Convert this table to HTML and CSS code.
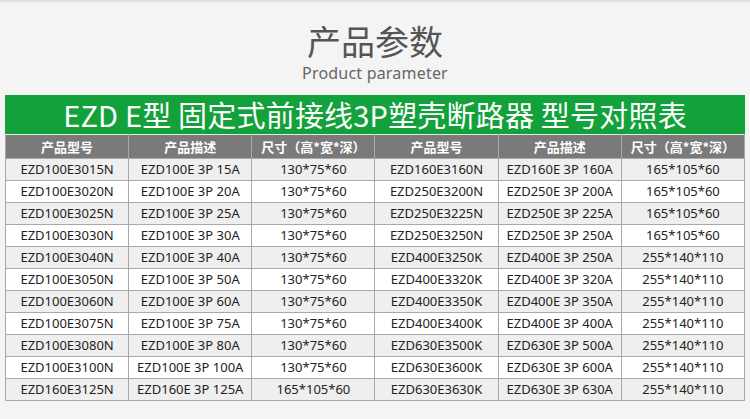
FILE: index.html
```html
<!DOCTYPE html>
<html lang="zh-CN">
<head>
<meta charset="utf-8">
<link rel="stylesheet" href="styles.css">
</head>
<body>
<div class="page">
  <header class="heading">
    <h1 class="title">产品参数</h1>
    <p class="subtitle">Product parameter</p>
  </header>
  <div class="banner">EZD E型 固定式前接线3P塑壳断路器 型号对照表</div>
  <table class="spec">
    <thead>
      <tr><th>产品型号</th><th>产品描述</th><th>尺寸（高*宽*深）</th><th>产品型号</th><th>产品描述</th><th>尺寸（高*宽*深）</th></tr>
    </thead>
    <tbody>
      <tr><td>EZD100E3015N</td><td>EZD100E 3P 15A</td><td>130*75*60</td><td>EZD160E3160N</td><td>EZD160E 3P 160A</td><td>165*105*60</td></tr>
      <tr><td>EZD100E3020N</td><td>EZD100E 3P 20A</td><td>130*75*60</td><td>EZD250E3200N</td><td>EZD250E 3P 200A</td><td>165*105*60</td></tr>
      <tr><td>EZD100E3025N</td><td>EZD100E 3P 25A</td><td>130*75*60</td><td>EZD250E3225N</td><td>EZD250E 3P 225A</td><td>165*105*60</td></tr>
      <tr><td>EZD100E3030N</td><td>EZD100E 3P 30A</td><td>130*75*60</td><td>EZD250E3250N</td><td>EZD250E 3P 250A</td><td>165*105*60</td></tr>
      <tr><td>EZD100E3040N</td><td>EZD100E 3P 40A</td><td>130*75*60</td><td>EZD400E3250K</td><td>EZD400E 3P 250A</td><td>255*140*110</td></tr>
      <tr><td>EZD100E3050N</td><td>EZD100E 3P 50A</td><td>130*75*60</td><td>EZD400E3320K</td><td>EZD400E 3P 320A</td><td>255*140*110</td></tr>
      <tr><td>EZD100E3060N</td><td>EZD100E 3P 60A</td><td>130*75*60</td><td>EZD400E3350K</td><td>EZD400E 3P 350A</td><td>255*140*110</td></tr>
      <tr><td>EZD100E3075N</td><td>EZD100E 3P 75A</td><td>130*75*60</td><td>EZD400E3400K</td><td>EZD400E 3P 400A</td><td>255*140*110</td></tr>
      <tr><td>EZD100E3080N</td><td>EZD100E 3P 80A</td><td>130*75*60</td><td>EZD630E3500K</td><td>EZD630E 3P 500A</td><td>255*140*110</td></tr>
      <tr><td>EZD100E3100N</td><td>EZD100E 3P 100A</td><td>130*75*60</td><td>EZD630E3600K</td><td>EZD630E 3P 600A</td><td>255*140*110</td></tr>
      <tr><td>EZD160E3125N</td><td>EZD160E 3P 125A</td><td>165*105*60</td><td>EZD630E3630K</td><td>EZD630E 3P 630A</td><td>255*140*110</td></tr>
    </tbody>
  </table>
</div>
</body>
</html>
```
FILE: styles.css
```css
html, body {
  margin: 0;
  padding: 0;
  background: #f4f4f4;
}
.page {
  width: 750px;
  height: 419px;
  overflow: hidden;
  box-sizing: border-box;
  padding: 0 5px;
  border-top: 2px solid #e2e2e2;
  font-family: "Noto Sans", "Noto Sans CJK SC", sans-serif;
}
.heading {
  height: 93px;
  text-align: center;
  color: #555;
}
.title {
  margin: 0;
  padding-top: 19px;
  font-family: "Noto Sans CJK SC", sans-serif;
  font-weight: 400;
  font-size: 34px;
  line-height: 40px;
  color: #555;
}
.subtitle {
  margin: 1px 0 0;
  font-family: "Noto Sans", sans-serif;
  font-size: 16px;
  line-height: 22px;
  color: #666;
  letter-spacing: 0.2px;
}
.banner {
  height: 39px;
  background: #12a13a;
  color: #fff;
  text-align: center;
  font-family: "Noto Sans CJK SC", sans-serif;
  font-size: 29px;
  line-height: 39px;
  letter-spacing: 0.2px;
}
.spec {
  width: 740px;
  table-layout: fixed;
  border-collapse: collapse;
  font-family: "Noto Sans", "Noto Sans CJK SC", sans-serif;
  font-size: 13px;
  color: #222;
}
.spec th, .spec td {
  border: 1px solid #a9a9a9;
  text-align: center;
  padding: 0;
  white-space: nowrap;
}
.spec th {
  height: 23px;
  background: #7a7a7a;
  color: #fff;
  font-family: "Noto Sans CJK SC", sans-serif;
  font-weight: 700;
  font-size: 13px;
  border-top: 1px solid #e8e8e8;
}
.spec td {
  height: 21px;
  line-height: 21px;
}
.spec tbody tr:nth-child(odd) td {
  background: #efefef;
}
.spec tbody tr:nth-child(even) td {
  background: #fff;
}
```
